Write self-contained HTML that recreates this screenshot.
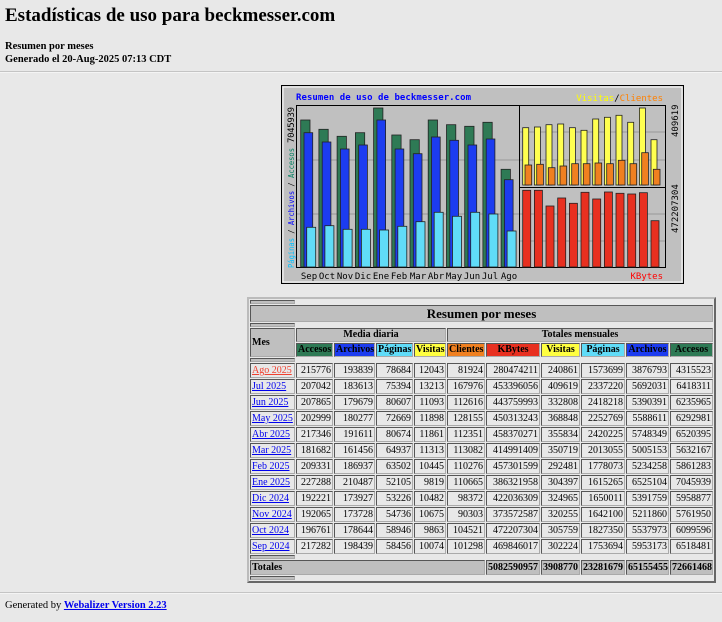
<!DOCTYPE html>
<html><head><meta charset="utf-8">
<style>
body{margin:0;background:#e8e8e8;font-family:"Liberation Serif",serif;color:#000;width:722px;height:622px;overflow:hidden;position:relative}
.a{position:absolute}
h2{margin:0;font-size:19px;font-weight:bold}
.hr{position:absolute;left:0;width:722px;height:0;border-top:1px solid #c4c4c4;border-bottom:1px solid #f4f4f4}
table.t{position:absolute;left:247px;top:297px;width:469px;table-layout:fixed;border:2px outset #bbb;border-collapse:separate;border-spacing:1px;font-size:10px;background:#e8e8e8}
.t td,.t th{border:1px inset #aaa;padding:0 1px;height:13px;line-height:13px;white-space:nowrap;overflow:hidden}
.t td{text-align:right;background:#e8e8e8}
.t td.m{text-align:left}
.t th{background:#bfbfbf}
.t tr.s th{height:2px;line-height:2px;padding:0;font-size:0}
.t tr.h th{height:12px;line-height:12px}
a{color:#0000ee}
</style></head><body>
<h2 class="a" style="left:5px;top:5px">Estadísticas de uso para beckmesser.com</h2>
<div class="a" style="left:5px;top:40px;font-size:10.5px;font-weight:bold;line-height:13px">Resumen por meses<br>Generado el 20-Aug-2025 07:13 CDT</div>
<div class="hr" style="top:71px"></div>

<svg class="a" style="left:0;top:0" width="722" height="300" font-family="DejaVu Sans Mono, monospace">
<rect x="281.5" y="85.5" width="402" height="198" fill="#c0c0c0" stroke="#000"/>
<rect x="283" y="87" width="399" height="195" fill="none" stroke="#fff" stroke-width="1"/>
<text x="296" y="100" fill="#0000ff" font-size="9" font-weight="bold" textLength="175">Resumen de uso de beckmesser.com</text>
<text x="663" y="101" font-size="9" text-anchor="end"><tspan fill="#ffff00">Visitas</tspan><tspan fill="#000">/</tspan><tspan fill="#ff8000">Clientes</tspan></text>
<text x="663" y="279" font-size="9" text-anchor="end" fill="#ff0000">KBytes</text>
<text transform="translate(294,268) rotate(-90)" font-size="8" textLength="120" lengthAdjust="spacingAndGlyphs"><tspan fill="#00c0ff">Páginas</tspan><tspan fill="#000"> / </tspan><tspan fill="#0000ff">Archivos</tspan><tspan fill="#000"> / </tspan><tspan fill="#008060">Accesos</tspan></text>
<text transform="translate(294,143) rotate(-90)" font-size="9" fill="#000" textLength="36">7045939</text>
<text transform="translate(678,137) rotate(-90)" font-size="9" fill="#000">409619</text>
<text transform="translate(678,233) rotate(-90)" font-size="9" fill="#000">472207304</text>
<rect x="296.5" y="105.5" width="223" height="162" fill="none" stroke="#000"/>
<rect x="519.5" y="105.5" width="146" height="82" fill="none" stroke="#000"/>
<rect x="519.5" y="187.5" width="146" height="80" fill="none" stroke="#000"/>
<g stroke="#999"><line x1="297" y1="160" x2="519" y2="160"/><line x1="297" y1="214" x2="519" y2="214"/><line x1="520" y1="160" x2="665" y2="160"/><line x1="520" y1="214" x2="665" y2="214"/><line x1="520" y1="241" x2="665" y2="241"/><line x1="520" y1="132" x2="665" y2="132"/></g>
<g stroke="#222" stroke-width="0.8">
<g fill="#2e7a55">
<rect x="300.7" y="120" width="9.3" height="147"/><rect x="318.9" y="129.3" width="9.3" height="137.7"/><rect x="337.1" y="136.3" width="9.3" height="130.7"/><rect x="355.4" y="132.7" width="9.3" height="134.3"/><rect x="373.6" y="108" width="9.3" height="159"/><rect x="391.8" y="135" width="9.3" height="132"/><rect x="410" y="139.7" width="9.3" height="127.3"/><rect x="428.2" y="120" width="9.3" height="147"/><rect x="446.5" y="124.7" width="9.3" height="142.3"/><rect x="464.7" y="126.3" width="9.3" height="140.7"/><rect x="482.9" y="122.3" width="9.3" height="144.7"/><rect x="501.1" y="169.3" width="9.3" height="97.7"/>
</g>
<g fill="#1c3cf0">
<rect x="304" y="132.7" width="8.7" height="134.3"/><rect x="322.2" y="142" width="8.7" height="125"/><rect x="340.4" y="149" width="8.7" height="118"/><rect x="358.7" y="145" width="8.7" height="122"/><rect x="376.9" y="120" width="8.7" height="147"/><rect x="395.1" y="149" width="8.7" height="118"/><rect x="413.3" y="153.7" width="8.7" height="113.3"/><rect x="431.5" y="137" width="8.7" height="130"/><rect x="449.8" y="140.3" width="8.7" height="126.7"/><rect x="468" y="145" width="8.7" height="122"/><rect x="486.2" y="139" width="8.7" height="128"/><rect x="504.4" y="179.7" width="8.7" height="87.3"/>
</g>
<g fill="#60dcf8">
<rect x="306.7" y="227.3" width="9" height="39.7"/><rect x="324.9" y="225.7" width="9" height="41.3"/><rect x="343.1" y="229.3" width="9" height="37.7"/><rect x="361.4" y="229.3" width="9" height="37.7"/><rect x="379.6" y="230" width="9" height="37"/><rect x="397.8" y="226.3" width="9" height="40.7"/><rect x="416" y="221.7" width="9" height="45.3"/><rect x="434.2" y="212.3" width="9" height="54.7"/><rect x="452.5" y="216.3" width="9" height="50.7"/><rect x="470.7" y="212.3" width="9" height="54.7"/><rect x="488.9" y="214" width="9" height="53"/><rect x="507.1" y="231" width="9" height="36"/>
</g>
<g fill="#ffff50">
<rect x="522.7" y="127.7" width="6" height="57.3"/><rect x="534.4" y="127" width="6" height="58"/><rect x="546" y="124.7" width="6" height="60.3"/><rect x="557.7" y="124" width="6" height="61"/><rect x="569.4" y="127.7" width="6" height="57.3"/><rect x="581" y="130.3" width="6" height="54.7"/><rect x="592.7" y="119" width="6" height="66"/><rect x="604.4" y="117.3" width="6" height="67.7"/><rect x="616" y="115.3" width="6" height="69.7"/><rect x="627.7" y="122.3" width="6" height="62.7"/><rect x="639.4" y="108" width="6" height="77"/><rect x="651" y="139.7" width="6" height="45.3"/>
</g>
<g fill="#f08020">
<rect x="525" y="165" width="6.7" height="20"/><rect x="536.7" y="164.3" width="6.7" height="20.7"/><rect x="548.3" y="167.7" width="6.7" height="17.3"/><rect x="560" y="166" width="6.7" height="19"/><rect x="571.7" y="163.7" width="6.7" height="21.3"/><rect x="583.3" y="163.7" width="6.7" height="21.3"/><rect x="595" y="163" width="6.7" height="22"/><rect x="606.7" y="163.7" width="6.7" height="21.3"/><rect x="618.3" y="160.3" width="6.7" height="24.7"/><rect x="630" y="163.7" width="6.7" height="21.3"/><rect x="641.7" y="152.7" width="6.7" height="32.3"/><rect x="653.3" y="169.3" width="6.7" height="15.7"/>
</g>
<g fill="#e83020">
<rect x="522.7" y="190.3" width="8" height="76.7"/><rect x="534.4" y="190.3" width="8" height="76.7"/><rect x="546" y="206" width="8" height="61"/><rect x="557.7" y="198" width="8" height="69"/><rect x="569.4" y="203.3" width="8" height="63.7"/><rect x="581" y="192.3" width="8" height="74.7"/><rect x="592.7" y="199" width="8" height="68"/><rect x="604.4" y="192" width="8" height="75"/><rect x="616" y="193.3" width="8" height="73.7"/><rect x="627.7" y="194" width="8" height="73"/><rect x="639.4" y="192.7" width="8" height="74.3"/><rect x="651" y="220.7" width="8" height="46.3"/>
</g>
</g>
<g font-size="9" fill="#000" text-anchor="middle">
<text x="309" y="279">Sep</text><text x="327" y="279">Oct</text><text x="345" y="279">Nov</text><text x="363" y="279">Dic</text><text x="381" y="279">Ene</text><text x="399" y="279">Feb</text><text x="418" y="279">Mar</text><text x="436" y="279">Abr</text><text x="454" y="279">May</text><text x="472" y="279">Jun</text><text x="490" y="279">Jul</text><text x="509" y="279">Ago</text>
</g>
</svg>

<table class="t">
<colgroup><col style="width:45px"><col style="width:37px"><col style="width:41px"><col style="width:37px"><col style="width:32px"><col style="width:38px"><col style="width:54px"><col style="width:39px"><col style="width:44px"><col style="width:43px"><col style="width:43px"></colgroup>
<tr class="s"><th></th></tr>
<tr><th colspan="11" style="font-size:13px;height:15px;line-height:15px">Resumen por meses</th></tr>
<tr class="s"><th></th></tr>
<tr class="h"><th rowspan="2" style="text-align:left">Mes</th><th colspan="4">Media diaria</th><th colspan="6">Totales mensuales</th></tr>
<tr class="h"><th style="background:#2e7a55">Accesos</th><th style="background:#1c3cf0">Archivos</th><th style="background:#60dcf8">Páginas</th><th style="background:#ffff40">Visitas</th><th style="background:#f08020">Clientes</th><th style="background:#e83020">KBytes</th><th style="background:#ffff40">Visitas</th><th style="background:#60dcf8">Páginas</th><th style="background:#1c3cf0">Archivos</th><th style="background:#2e7a55">Accesos</th></tr>
<tr class="s"><th></th></tr>
<tr><td class="m"><a href="#" style="color:#f04030">Ago 2025</a></td><td>215776</td><td>193839</td><td>78684</td><td>12043</td><td>81924</td><td>280474211</td><td>240861</td><td>1573699</td><td>3876793</td><td>4315523</td></tr>
<tr><td class="m"><a href="#">Jul 2025</a></td><td>207042</td><td>183613</td><td>75394</td><td>13213</td><td>167976</td><td>453396056</td><td>409619</td><td>2337220</td><td>5692031</td><td>6418311</td></tr>
<tr><td class="m"><a href="#">Jun 2025</a></td><td>207865</td><td>179679</td><td>80607</td><td>11093</td><td>112616</td><td>443759993</td><td>332808</td><td>2418218</td><td>5390391</td><td>6235965</td></tr>
<tr><td class="m"><a href="#">May 2025</a></td><td>202999</td><td>180277</td><td>72669</td><td>11898</td><td>128155</td><td>450313243</td><td>368848</td><td>2252769</td><td>5588611</td><td>6292981</td></tr>
<tr><td class="m"><a href="#">Abr 2025</a></td><td>217346</td><td>191611</td><td>80674</td><td>11861</td><td>112351</td><td>458370271</td><td>355834</td><td>2420225</td><td>5748349</td><td>6520395</td></tr>
<tr><td class="m"><a href="#">Mar 2025</a></td><td>181682</td><td>161456</td><td>64937</td><td>11313</td><td>113082</td><td>414991409</td><td>350719</td><td>2013055</td><td>5005153</td><td>5632167</td></tr>
<tr><td class="m"><a href="#">Feb 2025</a></td><td>209331</td><td>186937</td><td>63502</td><td>10445</td><td>110276</td><td>457301599</td><td>292481</td><td>1778073</td><td>5234258</td><td>5861283</td></tr>
<tr><td class="m"><a href="#">Ene 2025</a></td><td>227288</td><td>210487</td><td>52105</td><td>9819</td><td>110665</td><td>386321958</td><td>304397</td><td>1615265</td><td>6525104</td><td>7045939</td></tr>
<tr><td class="m"><a href="#">Dic 2024</a></td><td>192221</td><td>173927</td><td>53226</td><td>10482</td><td>98372</td><td>422036309</td><td>324965</td><td>1650011</td><td>5391759</td><td>5958877</td></tr>
<tr><td class="m"><a href="#">Nov 2024</a></td><td>192065</td><td>173728</td><td>54736</td><td>10675</td><td>90303</td><td>373572587</td><td>320255</td><td>1642100</td><td>5211860</td><td>5761950</td></tr>
<tr><td class="m"><a href="#">Oct 2024</a></td><td>196761</td><td>178644</td><td>58946</td><td>9863</td><td>104521</td><td>472207304</td><td>305759</td><td>1827350</td><td>5537973</td><td>6099596</td></tr>
<tr><td class="m"><a href="#">Sep 2024</a></td><td>217282</td><td>198439</td><td>58456</td><td>10074</td><td>101298</td><td>469846017</td><td>302224</td><td>1753694</td><td>5953173</td><td>6518481</td></tr>
<tr class="s"><th></th></tr>
<tr><th colspan="6" style="text-align:left">Totales</th><th style="text-align:right">5082590957</th><th style="text-align:right">3908770</th><th style="text-align:right">23281679</th><th style="text-align:right">65155455</th><th style="text-align:right">72661468</th></tr>
<tr class="s"><th></th></tr>
</table>

<div class="hr" style="top:592px"></div>
<div class="a" style="left:5px;top:600px;font-size:10.5px">Generated by <a href="#"><b>Webalizer Version 2.23</b></a></div>
</body></html>
